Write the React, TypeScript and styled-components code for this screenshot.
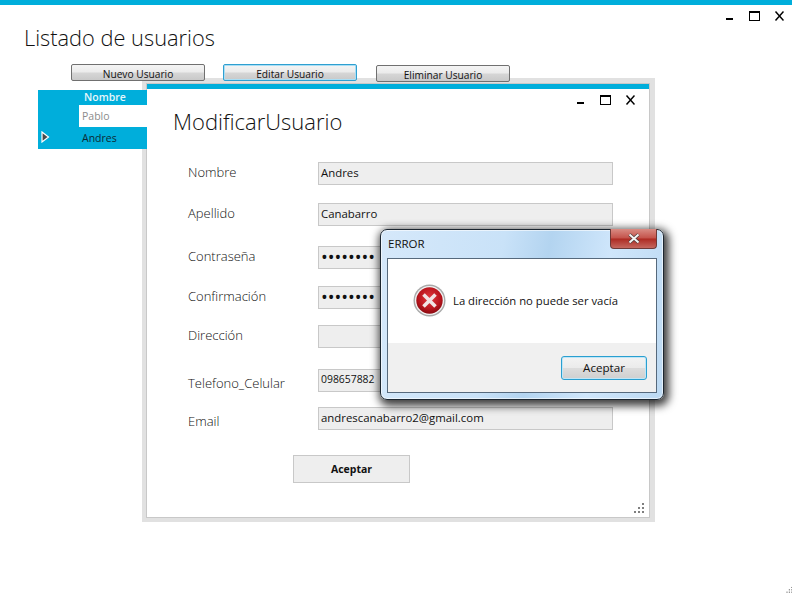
import styled, { createGlobalStyle } from "styled-components";

const GlobalStyle = createGlobalStyle`
  html, body {
    margin: 0;
    padding: 0;
    background: #fff;
  }
  body {
    font-family: "Open Sans", "Noto Sans", sans-serif;
    color: #000;
    overflow: hidden;
  }
`;

const fields = [
  { label: "Nombre", value: "Andres", gap: 0, shift: -1 },
  { label: "Apellido", value: "Canabarro", gap: 18, shift: -1 },
  { label: "Contraseña", value: "••••••••", gap: 20, shift: -1, secret: true },
  { label: "Confirmación", value: "••••••••", gap: 17, shift: -1, secret: true },
  { label: "Dirección", value: "", gap: 16, shift: -1 },
  { label: "Telefono_Celular", value: "098657882", gap: 21, shift: 3, tight: true, digits: true },
  { label: "Email", value: "andrescanabarro2@gmail.com", gap: 15, shift: 3, tight: true },
];

function WindowControls() {
  return (
    <Controls>
      <svg width="10" height="10" viewBox="0 0 10 10">
        <rect x="1" y="7" width="7" height="2" fill="#000" />
      </svg>
      <svg width="11" height="10" viewBox="0 0 11 10">
        <rect x="0.5" y="0.5" width="10" height="9" fill="none" stroke="#000" />
        <rect x="0" y="0" width="11" height="2" fill="#000" />
      </svg>
      <svg width="10" height="10" viewBox="0 0 10 10">
        <path d="M1.5 0.5 L9.5 9.5 M9.5 0.5 L1.5 9.5" stroke="#000" strokeWidth="1.5" fill="none" />
      </svg>
    </Controls>
  );
}

function Grip() {
  return (
    <svg width="12" height="12" viewBox="0 0 12 12">
      <g fill="#7f7f7f">
        <rect x="9" y="0" width="2" height="2" />
        <rect x="5" y="4" width="2" height="2" />
        <rect x="9" y="4" width="2" height="2" />
        <rect x="1" y="8" width="2" height="2" />
        <rect x="5" y="8" width="2" height="2" />
        <rect x="9" y="8" width="2" height="2" />
      </g>
    </svg>
  );
}

function ErrorIcon() {
  return (
    <svg width="33" height="33" viewBox="0 0 33 33">
      <defs>
        <radialGradient id="redBall" cx="50%" cy="40%" r="60%">
          <stop offset="0%" stopColor="#e23a3f" />
          <stop offset="70%" stopColor="#b8141c" />
          <stop offset="100%" stopColor="#8a0b12" />
        </radialGradient>
      </defs>
      <circle cx="16.5" cy="16.5" r="16" fill="#a9a9a9" />
      <circle cx="16.5" cy="16.5" r="14.6" fill="#f2f2f2" />
      <circle cx="16.5" cy="16.5" r="13.2" fill="url(#redBall)" />
      <path d="M10.5 10.5 L22.5 22.5 M22.5 10.5 L10.5 22.5" stroke="#f1e4e4" strokeWidth="3.6" fill="none" />
    </svg>
  );
}

export default function App() {
  return (
    <>
      <GlobalStyle />
      <Page>
        <TopBar />
        <MainControls>
          <WindowControls />
        </MainControls>
        <Title>Listado de usuarios</Title>
        <Toolbar>
          <ToolButton>Nuevo Usuario</ToolButton>
          <ToolButton $focused>Editar Usuario</ToolButton>
          <ToolButton $low>Eliminar Usuario</ToolButton>
        </Toolbar>
        <UserGrid>
          <GridHeader>Nombre</GridHeader>
          <GridRow>
            <RowMark />
            <GridCell $selected={false}>Pablo</GridCell>
          </GridRow>
          <GridRow>
            <RowMark>
              <svg width="9" height="12" viewBox="0 0 9 12">
                <path d="M1 1 L7.5 6 L1 11 Z" fill="#4a4a4a" stroke="#fff" strokeWidth="1.2" />
              </svg>
            </RowMark>
            <GridCell $selected>Andres</GridCell>
          </GridRow>
        </UserGrid>
        <PageGrip>
          <Grip />
        </PageGrip>

        <ChildWindow>
          <ChildInner>
            <ChildBar />
            <ChildControls>
              <WindowControls />
            </ChildControls>
            <ChildTitle>ModificarUsuario</ChildTitle>
            <Form>
              {fields.map((field) => (
                <FormRow key={field.label} $gap={field.gap}>
                  <FieldLabel $shift={field.shift}>{field.label}</FieldLabel>
                  <FieldBox $secret={field.secret} $tight={field.tight} $digits={field.digits}>
                    {field.value}
                  </FieldBox>
                </FormRow>
              ))}
            </Form>
            <SubmitButton>Aceptar</SubmitButton>
            <ChildGrip>
              <Grip />
            </ChildGrip>
          </ChildInner>
        </ChildWindow>

        <Dialog>
          <DialogHead>
            <span>ERROR</span>
            <CloseButton>
              <svg width="14" height="11" viewBox="0 0 14 11">
                <path
                  d="M2.5 1.5 L11.5 9.5 M11.5 1.5 L2.5 9.5"
                  stroke="#4d3a3a"
                  strokeWidth="3.4"
                  fill="none"
                />
                <path
                  d="M2.5 1.5 L11.5 9.5 M11.5 1.5 L2.5 9.5"
                  stroke="#f4f4f4"
                  strokeWidth="2"
                  fill="none"
                />
              </svg>
            </CloseButton>
          </DialogHead>
          <DialogBody>
            <DialogMessage>
              <ErrorIcon />
              <MessageText>La dirección no puede ser vacía</MessageText>
            </DialogMessage>
            <DialogFooter>
              <DialogButton>Aceptar</DialogButton>
            </DialogFooter>
          </DialogBody>
        </Dialog>
      </Page>
    </>
  );
}

const Page = styled.div`
  position: relative;
  width: 792px;
  height: 596px;
  background: #fff;
  overflow: hidden;
`;

const TopBar = styled.div`
  height: 5px;
  background: #00aedb;
`;

const Controls = styled.div`
  display: flex;
  gap: 14px;
  align-items: flex-start;
`;

const MainControls = styled.div`
  position: absolute;
  top: 11px;
  left: 725px;
`;

const Title = styled.h1`
  margin: 17px 0 0 24px;
  height: 31px;
  font-size: 21.8px;
  line-height: 31px;
  font-weight: 300;
  color: #111;
`;

const Toolbar = styled.div`
  position: relative;
  z-index: 2;
  display: flex;
  gap: 18px;
  margin: 11px 0 0 71px;
  align-items: flex-start;
`;

const ToolButton = styled.button<{ $focused?: boolean; $low?: boolean }>`
  box-sizing: border-box;
  width: 134px;
  height: 17px;
  margin-top: ${(p) => (p.$low ? "1px" : "0")};
  margin-left: ${(p) => (p.$low ? "1px" : "0")};
  padding: 3px 0 0;
  border: 1px solid ${(p) => (p.$focused ? "#2f9fd0" : "#707070")};
  border-radius: 2px;
  box-shadow: ${(p) => (p.$focused ? "0 0 0 1px #a9def5 inset" : "none")};
  background: linear-gradient(#f4f4f4, #ebebeb 48%, #d6d6d6 52%, #c9c9c9);
  font-family: inherit;
  font-size: 10.2px;
  line-height: 12px;
  color: #111;
`;

const UserGrid = styled.div`
  position: relative;
  z-index: 1;
  width: 109px;
  margin: 8px 0 0 38px;
  background: #00aedb;
`;

const GridHeader = styled.div`
  box-sizing: border-box;
  height: 15px;
  padding-left: 46px;
  font-size: 10.5px;
  font-weight: 600;
  line-height: 15px;
  color: #e6f7fc;
`;

const GridRow = styled.div`
  display: flex;
  height: 22px;
`;

const RowMark = styled.div`
  display: flex;
  align-items: center;
  width: 41px;
  padding-left: 3px;
  box-sizing: border-box;
  margin-top: -3px;
`;

const GridCell = styled.div<{ $selected: boolean }>`
  flex: 1;
  padding-left: 3px;
  font-size: 10.5px;
  line-height: 22px;
  background: ${(p) => (p.$selected ? "transparent" : "#fff")};
  color: ${(p) => (p.$selected ? "#0c2a33" : "#8c8c8c")};
`;

const PageGrip = styled.div`
  position: absolute;
  right: -1px;
  bottom: -1px;
  transform: scale(0.6);
  transform-origin: bottom right;
`;

const ChildWindow = styled.div`
  position: absolute;
  left: 142px;
  top: 78px;
  box-sizing: border-box;
  width: 513px;
  height: 444px;
  padding: 5px 5px 4px 4px;
  background: #e1e1e1;
`;

const ChildInner = styled.div`
  position: relative;
  box-sizing: border-box;
  height: 100%;
  border: 1px solid #c8c8c8;
  background: #fff;
`;

const ChildBar = styled.div`
  height: 5px;
  background: #00aedb;
`;

const ChildControls = styled.div`
  position: absolute;
  top: 11px;
  left: 429px;
`;

const ChildTitle = styled.h2`
  margin: 17px 0 0 26px;
  height: 30px;
  font-size: 22px;
  line-height: 30px;
  font-weight: 300;
  color: #111;
`;

const Form = styled.div`
  display: flex;
  flex-direction: column;
  margin: 26px 0 0 41px;
`;

const FormRow = styled.div<{ $gap: number }>`
  display: flex;
  align-items: center;
  height: 23px;
  margin-top: ${(p) => p.$gap}px;
`;

const FieldLabel = styled.label<{ $shift: number }>`
  width: 130px;
  font-size: 13px;
  font-weight: 300;
  line-height: 23px;
  color: #111;
  transform: translateY(${(p) => p.$shift}px);
`;

const FieldBox = styled.div<{ $secret?: boolean; $tight?: boolean; $digits?: boolean }>`
  box-sizing: border-box;
  width: 295px;
  height: 23px;
  padding-left: 2px;
  border: 1px solid #c8c8c8;
  background: #eeeeee;
  font-size: ${(p) => (p.$secret ? "18px" : p.$digits ? "10.4px" : "11.4px")};
  line-height: ${(p) => (p.$tight ? "19px" : "20px")};
  font-weight: 400;
  color: #111;
  overflow: hidden;
`;

const SubmitButton = styled.button`
  display: block;
  box-sizing: border-box;
  width: 117px;
  height: 28px;
  margin: 25px 0 0 146px;
  padding: 0;
  border: 1px solid #c8c8c8;
  background: #eeeeee;
  font-family: inherit;
  font-size: 10.5px;
  font-weight: 700;
  color: #111;
`;

const ChildGrip = styled.div`
  position: absolute;
  right: 4px;
  bottom: -3px;
`;

const Dialog = styled.div`
  position: absolute;
  left: 380px;
  top: 229px;
  box-sizing: border-box;
  width: 284px;
  height: 171px;
  padding: 0 6px 6px 6px;
  display: flex;
  flex-direction: column;
  border: 1px solid #1c2630;
  border-radius: 7px;
  background: linear-gradient(100deg, #d5e8fa 0%, #c9e2f8 40%, #b3d4f0 55%, #cfe6fb 75%, #bcd9f2 100%);
  box-shadow:
    0 0 0 1px rgba(255, 255, 255, 0.6) inset,
    2px 3px 9px 3px rgba(0, 0, 0, 0.75);
`;

const DialogHead = styled.div`
  position: relative;
  height: 28px;
  flex: none;
  padding-left: 1px;
  font-size: 11.5px;
  line-height: 28px;
  color: #111;
`;

const CloseButton = styled.div`
  position: absolute;
  top: -1px;
  right: 0;
  display: flex;
  align-items: center;
  justify-content: center;
  box-sizing: border-box;
  width: 47px;
  height: 20px;
  border: 1px solid #6e3a38;
  border-top: 0;
  border-radius: 0 0 4px 4px;
  background: linear-gradient(#d98c84, #c4524a 48%, #ad2a22 52%, #c5685f);
`;

const DialogBody = styled.div`
  flex: 1;
  display: flex;
  flex-direction: column;
  border: 1px solid #56697c;
  background: #fff;
`;

const DialogMessage = styled.div`
  flex: 1;
  display: flex;
  align-items: center;
  gap: 7px;
  padding-left: 25px;
  padding-bottom: 2px;
`;

const MessageText = styled.span`
  font-size: 11.3px;
  color: #111;
`;

const DialogFooter = styled.div`
  display: flex;
  justify-content: flex-end;
  align-items: flex-start;
  box-sizing: border-box;
  height: 49px;
  padding: 13px 9px 0 0;
  background: #f0f0f0;
`;

const DialogButton = styled.button`
  box-sizing: border-box;
  width: 86px;
  height: 24px;
  padding: 0 0 2px;
  border: 1px solid #2a9fd0;
  border-radius: 3px;
  box-shadow: 0 0 0 1px #bfe6f7 inset;
  background: linear-gradient(#f3f3f3, #ebebeb 48%, #dcdcdc 52%, #cfcfcf);
  font-family: inherit;
  font-size: 11.6px;
  color: #111;
`;
